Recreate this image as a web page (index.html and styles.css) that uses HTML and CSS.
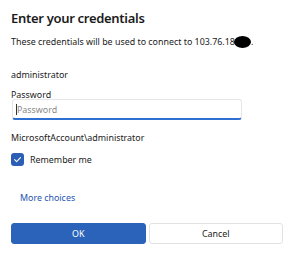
FILE: index.html
```html
<!DOCTYPE html>
<html>
<head>
<meta charset="utf-8">
<link rel="stylesheet" href="styles.css">
</head>
<body>
<div class="dialog">
  <h1 class="title">Enter your credentials</h1>
  <p class="desc">These credentials will be used to connect to 103.76.18<span class="blob"></span>.</p>
  <div class="user">administrator</div>
  <label class="label">Password</label>
  <div class="input"><span class="caret"></span><span class="placeholder">Password</span></div>
  <div class="account">MicrosoftAccount\administrator</div>
  <div class="check-row">
    <span class="checkbox"><svg width="9" height="9" viewBox="0 0 10 10"><path d="M1.8 5.2 L4 7.3 L8.3 2.8" fill="none" stroke="#fff" stroke-width="1.2" stroke-linecap="round" stroke-linejoin="round"/></svg></span>
    <span class="check-label">Remember me</span>
  </div>
  <a class="more">More choices</a>
  <div class="buttons">
    <button class="btn primary">OK</button>
    <button class="btn secondary">Cancel</button>
  </div>
</div>
</body>
</html>
```
FILE: styles.css
```css
html, body {
  margin: 0;
  padding: 0;
  background: #ffffff;
}
body {
  font-family: "Noto Sans", "Open Sans", sans-serif;
  color: #1b1b1b;
  width: 300px;
  height: 256px;
  overflow: hidden;
}
.dialog {
  display: flex;
  flex-direction: column;
  padding: 8px 17px 0 11px;
}
.title {
  margin: 0;
  font-size: 13px;
  font-weight: 600;
  line-height: 20px;
  letter-spacing: -0.3px;
}
.desc {
  margin: 7px 0 0;
  font-size: 8.9px;
  line-height: 13px;
  display: flex;
  align-items: center;
}
.blob {
  display: inline-block;
  width: 17px;
  height: 12px;
  border-radius: 50%;
  background: #000;
  margin-left: -1px;
}
.user {
  margin-top: 20px;
  font-size: 8.9px;
  line-height: 13px;
}
.label {
  margin-top: 7px;
  font-size: 8.9px;
  line-height: 13px;
}
.input {
  margin-top: -2px;
  margin-left: 1px;
  width: 230px;
  height: 21px;
  box-sizing: border-box;
  border: 1px solid #e6e6e6;
  border-bottom: 2px solid #2f6fd2;
  border-radius: 3px;
  display: flex;
  align-items: center;
  padding-left: 3px;
}
.caret {
  width: 1px;
  height: 11px;
  background: #333;
}
.placeholder {
  font-size: 8.9px;
  color: #8a8a8a;
}
.account {
  margin-top: 11px;
  font-size: 8.9px;
  line-height: 13px;
}
.check-row {
  margin-top: 9px;
  display: flex;
  align-items: center;
  gap: 6px;
}
.checkbox {
  width: 13px;
  height: 13px;
  border-radius: 3px;
  background: #2b5fb6;
  display: flex;
  align-items: center;
  justify-content: center;
}
.check-label {
  font-size: 8.9px;
  line-height: 13px;
}
.more {
  margin-top: 25px;
  margin-left: 9px;
  font-size: 8.9px;
  line-height: 13px;
  color: #2455b0;
}
.buttons {
  margin-top: 19px;
  display: flex;
  gap: 3px;
}
.btn {
  width: 135px;
  height: 21px;
  box-sizing: border-box;
  border-radius: 3px;
  font-family: "Noto Sans", "Open Sans", sans-serif;
  font-size: 8.9px;
  padding: 0;
}
.primary {
  background: #2b63ba;
  border: 1px solid #2b63ba;
  color: #ffffff;
}
.secondary {
  background: #ffffff;
  border: 1px solid #e2e2e2;
  color: #1b1b1b;
}
```
